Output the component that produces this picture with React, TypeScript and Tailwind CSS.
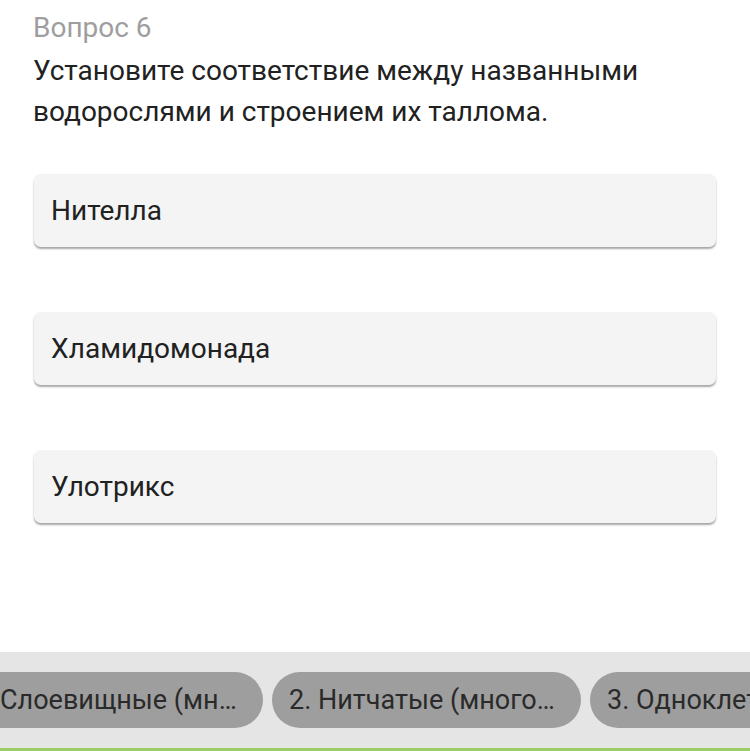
const items = ['Нителла', 'Хламидомонада', 'Улотрикс'];

const options = [
  '1. Слоевищные (многоклеточные)',
  '2. Нитчатые (многоклеточные)',
  '3. Одноклеточные',
];

export default function App() {
  return (
    <div className="w-[750px] h-[751px] bg-white overflow-hidden flex flex-col font-['Roboto',sans-serif]">
      <div className="px-[33px] pt-[8px] flex-1">
        <p className="text-[28px] leading-[40px] text-[#9e9e9e]">Вопрос 6</p>
        <p className="mt-[2px] text-[28px] leading-[41px] text-[#212121]">
          Установите соответствие между названными водорослями и строением их таллома.
        </p>
        <div className="mt-[42px] flex flex-col gap-[65px] px-[1px]">
          {items.map((t) => (
            <div
              key={t}
              className="h-[73px] flex items-center px-[17px] rounded-[7px] bg-[#f4f4f4] shadow-[0_2px_2px_rgba(0,0,0,0.35)] text-[28px] text-[#212121]"
            >
              {t}
            </div>
          ))}
        </div>
      </div>
      <div className="h-[96px] bg-[#e5e5e5] flex items-center overflow-hidden">
        <div className="flex gap-[9px] ml-[-46px] shrink-0">
          {options.map((o) => (
            <div
              key={o}
              className="w-[309px] h-[56px] shrink-0 rounded-full bg-[#9e9e9e] pl-[17px] pr-[21px] flex items-center text-[27px] text-[#2a2a2a]"
            >
              <span className="truncate">{o}</span>
            </div>
          ))}
        </div>
      </div>
      <div className="h-[3px] bg-[#9ccc65]" />
    </div>
  );
}
